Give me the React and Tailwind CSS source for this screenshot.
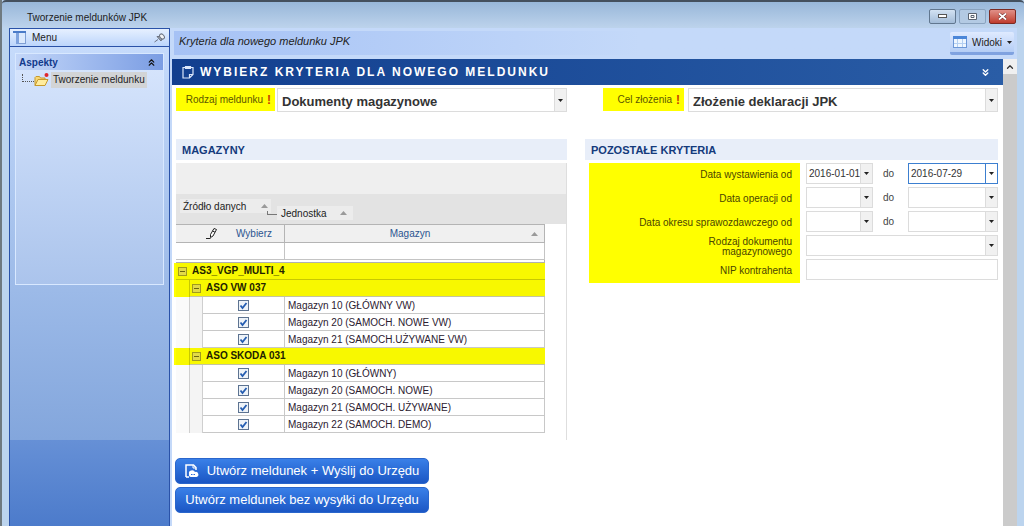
import React, { useState } from 'react';
import { ChevronUp, ChevronsDown, ChevronsUp } from 'lucide-react';

const GROUPS = [
    {
        name: 'ASO VW 037',
        rows: ['Magazyn 10 (GŁÓWNY VW)', 'Magazyn 20 (SAMOCH. NOWE VW)', 'Magazyn 21 (SAMOCH.UŻYWANE VW)'],
    },
    {
        name: 'ASO SKODA 031',
        rows: ['Magazyn 10 (GŁÓWNY)', 'Magazyn 20 (SAMOCH. NOWE)', 'Magazyn 21 (SAMOCH. UŻYWANE)', 'Magazyn 22 (SAMOCH. DEMO)'],
    },
];

const DATE_ROWS = [
    { id: 'wystawienia', label: 'Data wystawienia od', from: '2016-01-01', to: '2016-07-29', active: true },
    { id: 'operacji', label: 'Data operacji od', from: '', to: '' },
    { id: 'okresu', label: 'Data okresu sprawozdawczego od', from: '', to: '' },
];

const Caret = () => (
    <svg width="5" height="3" viewBox="0 0 5 3"><path d="M0 0h5L2.5 3z" fill="#222" /></svg>
);

const SortMark = () => (
    <svg width="7" height="4" viewBox="0 0 7 4"><path d="M3.5 0L7 4H0z" fill="#9a9a9a" /></svg>
);

const MenuIcon = () => (
    <svg width="14" height="13" viewBox="0 0 14 13">
        <rect x="3.5" y="1.5" width="9" height="11" fill="#dbe9fd" stroke="#7f9fd4" />
        <rect x="3" y="2" width="3" height="11" fill="#7fa3de" />
        <rect x="0" y="0" width="13" height="2" fill="#4a7bc8" />
    </svg>
);

const ViewsIcon = () => (
    <svg width="14" height="12" viewBox="0 0 14 12">
        <rect x="0.5" y="0.5" width="13" height="11" fill="#eef6ff" stroke="#6d97d6" />
        <rect x="0" y="0" width="14" height="3" fill="#4b86d8" />
        <path d="M4.5 3v8M9.5 3v8M1 7.5h12" stroke="#b4cff2" />
    </svg>
);

const PinIcon = () => (
    <svg width="11" height="10" viewBox="0 0 11 10" fill="none" stroke="#6b7280">
        <path d="M.5 9l3.500-2.500" />
        <path d="M3 3.500l4 4.500L8 6l1.500-.5L6 2l-1 1.500z" fill="#9ca3af" />
        <ellipse cx="8" cy="3.500" rx="2" ry="2.800" transform="rotate(-40 8 3.500)" fill="#f3f4f6" />
    </svg>
);

const FolderIcon = () => (
    <svg width="15" height="14" viewBox="0 0 15 14">
        <path d="M1 12.500V4.500l1-1h3.500l1 1.500H11v2" fill="#f7d774" stroke="#c79a2c" />
        <path d="M1 12.500l3-6h10l-3 6z" fill="#ffec9e" stroke="#c79a2c" />
        <circle cx="12.500" cy="2" r="2" fill="#e0282e" />
    </svg>
);

const ClipboardIcon = () => (
    <svg width="12" height="14" viewBox="0 0 12 14" fill="none" stroke="#dbe7fb" strokeWidth="1.200">
        <path d="M3 2.500H1V13h6.500L11 9.500v-7H9M7.500 13V9.500H11" />
        <path d="M3.500 1.500h5v2h-5z" fill="#dbe7fb" />
    </svg>
);

const PencilIcon = () => (
    <svg width="12" height="11" viewBox="0 0 12 11" fill="none" stroke="#222">
        <path d="M4.500 9.500V6.500l3.500-6 2.500 1-3.500 6.500z" fill="#fff" />
        <path d="M0 10.500h4.500M6.500 3l2.500 1.200" />
    </svg>
);

const SendIcon = () => (
    <svg width="14" height="14" viewBox="0 0 14 14">
        <path d="M1 13V1h7.500L11 3.500V6M1 13h3" fill="none" stroke="#fff" strokeWidth="1.500" />
        <path d="M8 1v3h3" fill="none" stroke="#fff" />
        <path d="M4 10a3.200 3 0 016-2A2.600 2.600 0 0111.500 13H6a2.200 2.200 0 01-2-3z" fill="#fff" />
        <path d="M6 10.500h4.500" stroke="#2a69d6" strokeWidth="1.200" strokeDasharray="1.500 1" />
    </svg>
);

const BigSelect = ({ id, value }) => (
    <div className="relative flex-1 h-6 border border-[#dcdcdc] bg-white">
        <select id={id} className="w-full h-full appearance-none pl-1 text-[13px] leading-5 font-bold text-[#333] outline-none">
            <option>{value}</option>
        </select>
        <span className="absolute right-0 inset-y-0 w-3 bg-[#f1f1f1] border-l border-[#dcdcdc] flex items-center justify-center pointer-events-none">
            <Caret />
        </span>
    </div>
);

const ComboInput = ({ id, label, value, active, className }) => (
    <div className={`flex h-[21px] border bg-white ${active ? 'border-[#3c7fd0]' : 'border-[#dcdcdc]'} ${className}`}>
        <input
            id={id}
            aria-label={label}
            defaultValue={value}
            className="flex-1 min-w-0 pl-0.5 text-[10px] text-[#333] outline-none"
        />
        <button
            aria-label="Rozwiń"
            className={`w-3 border-l flex items-center justify-center ${active ? 'bg-white border-[#3c7fd0]' : 'bg-[#f1f1f1] border-[#dcdcdc]'}`}
        >
            <Caret />
        </button>
    </div>
);

const Field = ({ id, label, children }) => (
    <div className="flex h-6">
        <label htmlFor={id} className="flex-1 ml-1 pr-2 bg-[#ffff00] flex items-center justify-end text-right text-[10px] leading-[10px] text-[#4a4500]">
            <span className="max-w-40">{label}</span>
        </label>
        <div className="w-[192px] ml-1.5 flex items-start">{children}</div>
    </div>
);

const Expander = () => (
    <button aria-label="Zwiń" className="w-[9px] h-[9px] border border-[#a09a20] bg-[#e2da48] flex items-center justify-center shrink-0">
        <span className="w-[5px] h-px bg-[#6b6610]" />
    </button>
);

const SectionTitle = ({ children }) => (
    <h2 className="h-[21px] mb-[3px] px-1.5 pt-px bg-[#e8eef9] flex items-center text-[11px] font-bold text-[#143a7c]">{children}</h2>
);

const Sidebar = () => (
    <aside className="w-[161px] shrink-0 border-x border-t border-[#2a52a8] flex flex-col">
        <div className="h-[18px] shrink-0 pl-[3px] pr-1 flex items-center bg-gradient-to-b from-[#e6f0ff] to-[#bcd5fb] border-b border-[#2a52a8]">
            <MenuIcon />
            <span className="ml-[5px] flex-1 text-[10px] text-[#222]">Menu</span>
            <PinIcon />
        </div>
        <div className="flex-1 px-[5px] pt-1.5 bg-gradient-to-b from-[#c6dbfb] to-[#83a6dc]">
            <div className="h-[232px] border border-[#d8e8ff] bg-gradient-to-b from-[#d8e6fd] to-[#abc4ec]">
                <div className="h-4 pl-[3px] pr-1.5 flex items-center justify-between bg-gradient-to-r from-[#c3d6f8] to-[#7b9de3]">
                    <span className="text-[10px] font-bold text-[#123a8c]">Aspekty</span>
                    <ChevronsUp size={11} color="#111" strokeWidth={2.5} />
                </div>
                <div className="pl-1.5 pt-0.5 flex items-center">
                    <span className="w-3 h-2 mb-1 border-l border-b border-dotted border-[#555]" />
                    <FolderIcon />
                    <a href="#meldunek" className="ml-0.5 px-0.5 h-4 bg-[#d2d4d6] text-[10px] leading-4 text-[#222]">Tworzenie meldunku</a>
                </div>
            </div>
        </div>
        <div className="h-[86px] bg-gradient-to-b from-[#6690d6] to-[#4c7bcb]" />
    </aside>
);

const WarehouseTable = () => {
    const [unchecked, setUnchecked] = useState([]);
    const toggle = (key) => {
        setUnchecked(unchecked.includes(key) ? unchecked.filter(k => k !== key) : [...unchecked, key]);
    };

    return (
        <table className="w-[369px] table-fixed border-separate border-spacing-0 text-[10px] leading-3 text-[#2b2030]">
            <colgroup>
                <col className="w-[14px]" />
                <col className="w-[13px]" />
                <col className="w-[82px]" />
                <col />
            </colgroup>
            <thead>
                <tr className="h-[19px] bg-[#f0f0f0] text-[#2c5590]">
                    <th colSpan={3} className="border-y border-r border-[#b4b4b4] font-normal">
                        <div className="flex items-center justify-end gap-[18px] pr-3">
                            <PencilIcon />
                            Wybierz
                        </div>
                    </th>
                    <th className="border-y border-r border-[#b4b4b4] font-normal">
                        <div className="flex items-center pl-1 pr-1.5">
                            <span className="flex-1">Magazyn</span>
                            <SortMark />
                        </div>
                    </th>
                </tr>
            </thead>
            <tbody>
                <tr className="h-[17px]">
                    <td colSpan={3} className="border-r border-b border-[#c4c4c4]" />
                    <td className="border-r border-b border-[#c4c4c4]" />
                </tr>
                <tr className="h-[3px]">
                    <td colSpan={4} className="border-r border-b border-[#b0b0b0]" />
                </tr>
                <tr className="h-[17px]">
                    <td colSpan={4} className="bg-[#f8f800] border-b border-[#c8c800] shadow-[-2px_0_0_#ffff00]">
                        <div className="flex items-center gap-[5px] pl-0.5 font-bold text-[#222200]">
                            <Expander /> AS3_VGP_MULTI_4
                        </div>
                    </td>
                </tr>
                {GROUPS.map(group => (
                    <React.Fragment key={group.name}>
                        <tr className="h-[17px]">
                            <td className="bg-[#f8f800] border-r border-[#c8c800] shadow-[-2px_0_0_#ffff00]" />
                            <td colSpan={3} className="bg-[#f8f800] border-b border-[#c4c4a0]">
                                <div className="flex items-center gap-[5px] pl-0.5 font-bold text-[#222200]">
                                    <Expander /> {group.name}
                                </div>
                            </td>
                        </tr>
                        {group.rows.map(row => {
                            const key = group.name + row;
                            return (
                                <tr key={key} className="h-[17px]">
                                    <td className="border-r border-[#cfcfcf] bg-[#fafafa]" />
                                    <td className="border-r border-[#cfcfcf] bg-[#f4f4f4]" />
                                    <td className="border-r border-b border-[#c8c8c8]">
                                        <input
                                            type="checkbox"
                                            aria-label={row}
                                            checked={!unchecked.includes(key)}
                                            onChange={() => toggle(key)}
                                            className="block mx-auto w-[11px] h-[11px] appearance-none border border-[#5d7391] bg-[#eef3f8] bg-center bg-no-repeat checked:bg-[url('data:image/svg+xml,%3Csvg%20xmlns=%22http://www.w3.org/2000/svg%22%20width=%229%22%20height=%229%22%3E%3Cpath%20d=%22M1.5%204.5l2%202.500l4-5%22%20fill=%22none%22%20stroke=%22%23245cb0%22%20stroke-width=%221.800%22/%3E%3C/svg%3E')]"
                                        />
                                    </td>
                                    <td className="pl-[3px] pt-0.5 border-r border-b border-[#c8c8c8]">{row}</td>
                                </tr>
                            );
                        })}
                    </React.Fragment>
                ))}
            </tbody>
        </table>
    );
};

const ActionButton = ({ children }) => (
    <button className="w-[254px] h-[26px] rounded-[5px] flex items-center justify-center gap-2 bg-gradient-to-b from-[#3a80e8] to-[#1b56c4] border border-[#2a66cc] text-[13px] text-white">
        {children}
    </button>
);

const Content = () => (
    <main className="flex-1 min-w-0 bg-white pb-3">
        <div className="h-[26px] pl-2.5 pr-3 flex items-center bg-gradient-to-r from-[#123f8f] to-[#2a5da6]">
            <ClipboardIcon />
            <h1 className="ml-1.5 flex-1 text-[12px] font-bold tracking-[2px] text-white">WYBIERZ KRYTERIA DLA NOWEGO MELDUNKU</h1>
            <ChevronsDown size={11} color="#fff" strokeWidth={3} />
        </div>

        <div className="pl-1 pr-[5px] pt-[3px] grid grid-cols-[391fr_413fr] gap-x-[18px]">
            <div className="flex gap-0.5 mb-[27px]">
                <label htmlFor="rodzaj" className="w-[99px] h-[23px] pr-1 bg-[#ffff00] flex items-center justify-end gap-1 text-[10px] text-[#5c5600]">
                    Rodzaj meldunku <b className="text-xs leading-4 text-[#c84000]">!</b>
                </label>
                <BigSelect id="rodzaj" value="Dokumenty magazynowe" />
            </div>
            <div className="flex gap-1 mb-[27px] pl-[18px]">
                <label htmlFor="cel" className="w-[81px] h-[23px] pr-1 bg-[#ffff00] flex items-center justify-end gap-1 text-[10px] text-[#5c5600]">
                    Cel złożenia <b className="text-xs leading-4 text-[#c84000]">!</b>
                </label>
                <BigSelect id="cel" value="Złożenie deklaracji JPK" />
            </div>

            <section>
                <SectionTitle>MAGAZYNY</SectionTitle>
                <div className="border-r border-[#dedede] pb-[7px]">
                    <div className="h-[31px] bg-[#efefef]" />
                    <div className="h-[30px] pt-[5px] pl-1 bg-[#e3e3e3] flex items-start text-[10px] text-[#222]">
                        <button className="h-[14px] w-[91px] px-[3px] flex items-center justify-between bg-[#ececec]">Źródło danych <SortMark /></button>
                        <span className="w-2.5 h-1 mt-3 -ml-1 border-l border-b border-[#777]" />
                        <button className="h-[14px] mt-[7px] w-[76px] px-1 pr-1.5 flex items-center justify-between bg-[#ececec]">Jednostka <SortMark /></button>
                    </div>
                    <WarehouseTable />
                </div>
            </section>

            <section>
                <SectionTitle>POZOSTAŁE KRYTERIA</SectionTitle>
                {DATE_ROWS.map(row => (
                    <Field key={row.id} id={row.id} label={row.label}>
                        <ComboInput id={row.id} value={row.from} className="w-[67px]" />
                        <span className="flex-1 pr-1 text-center text-[10px] leading-[22px] text-[#444]">do</span>
                        <ComboInput label={`${row.label} – do`} value={row.to} active={row.active} className="w-[90px]" />
                    </Field>
                ))}
                <Field id="dokument" label={<>Rodzaj dokumentu<br />magazynowego</>}>
                    <ComboInput id="dokument" value="" className="flex-1" />
                </Field>
                <Field id="nip" label="NIP kontrahenta">
                    <input id="nip" className="flex-1 h-[21px] border border-[#dcdcdc] px-1 text-[10px] outline-none" />
                </Field>
            </section>
        </div>

        <div className="pl-[3px] pt-[18px] flex flex-col items-start gap-[3px]">
            <ActionButton><SendIcon /> Utwórz meldunek + Wyślij do Urzędu</ActionButton>
            <ActionButton>Utwórz meldunek bez wysyłki do Urzędu</ActionButton>
        </div>
    </main>
);

const App = () => {
    return (
        <div className="min-h-screen flex flex-col border-l-2 border-[#6f7a80] bg-[#bcd4ee] font-['Liberation_Sans',Arial,sans-serif] text-[#222]">
            <header className="h-7 shrink-0 pl-[25px] pr-2 border-t-2 border-[#44505e] flex items-center bg-gradient-to-b from-[#98b7d9] to-[#bdd3ec] rounded-t">
                <span className="flex-1 pt-1 text-[10px] text-[#1c1c1c]">Tworzenie meldunków JPK</span>
                <div className="flex gap-[3px] pt-0.5">
                    <button aria-label="Minimalizuj" className="w-[27px] h-[15px] rounded-xs border border-[#61778f] bg-gradient-to-b from-[#d3e2f2] to-[#a3bcd8] flex items-center justify-center">
                        <span className="w-[9px] h-1 border border-[#555] bg-white" />
                    </button>
                    <button aria-label="Maksymalizuj" className="w-[27px] h-[15px] rounded-xs border border-[#8aa3bf] bg-[#b3cae3] flex items-center justify-center">
                        <svg width="9" height="7" viewBox="0 0 9 7"><path d="M.5.500h8v6h-8zM3 2.500h3v2H3z" fill="#fff" stroke="#5b6470" /></svg>
                    </button>
                    <button aria-label="Zamknij" className="w-[27px] h-[15px] rounded-xs border border-[#7c2a22] bg-gradient-to-b from-[#e09088] to-[#bf3a2c] flex items-center justify-center">
                        <svg width="9" height="7" viewBox="0 0 9 7" fill="none"><path d="M1 .5l7 6M8 .5l-7 6" stroke="#703030" strokeWidth="3" /><path d="M1 .5l7 6M8 .5l-7 6" stroke="#fff" strokeWidth="1.800" /></svg>
                    </button>
                </div>
            </header>

            <div className="flex-1 flex pl-[7px] pr-[7px]">
                <Sidebar />
                <div className="flex-1 min-w-0 flex flex-col bg-[#c4d9f9]">
                    <div className="h-[31px] shrink-0 pt-[3px] pl-1 pr-[3px] flex">
                        <div className="flex-1 h-6 pl-[5px] pb-1 flex items-center bg-gradient-to-r from-[#a6c2f5] via-[#c4d9f9] via-60% to-[#c4d9f9] text-[11px] italic text-[#222]">
                            Kryteria dla nowego meldunku JPK
                        </div>
                        <button className="w-16 h-[23px] mt-px pl-[3px] pr-0.5 rounded-xs flex items-center justify-between bg-gradient-to-b from-[#dfeaff] to-[#b4cdf5] border-b-3 border-[#7fa2e0] text-[10px]">
                            <ViewsIcon /> Widoki <Caret />
                        </button>
                    </div>
                    <div className="flex-1 flex pl-0.5">
                        <Content />
                        <div className="w-[14px] shrink-0 bg-[#cbcbcb]">
                            <div className="h-[15px] bg-[#f0f0f0] flex items-center justify-center"><ChevronUp size={10} color="#333" strokeWidth={3} /></div>
                        </div>
                    </div>
                </div>
            </div>
        </div>
    );
};

export default App;
